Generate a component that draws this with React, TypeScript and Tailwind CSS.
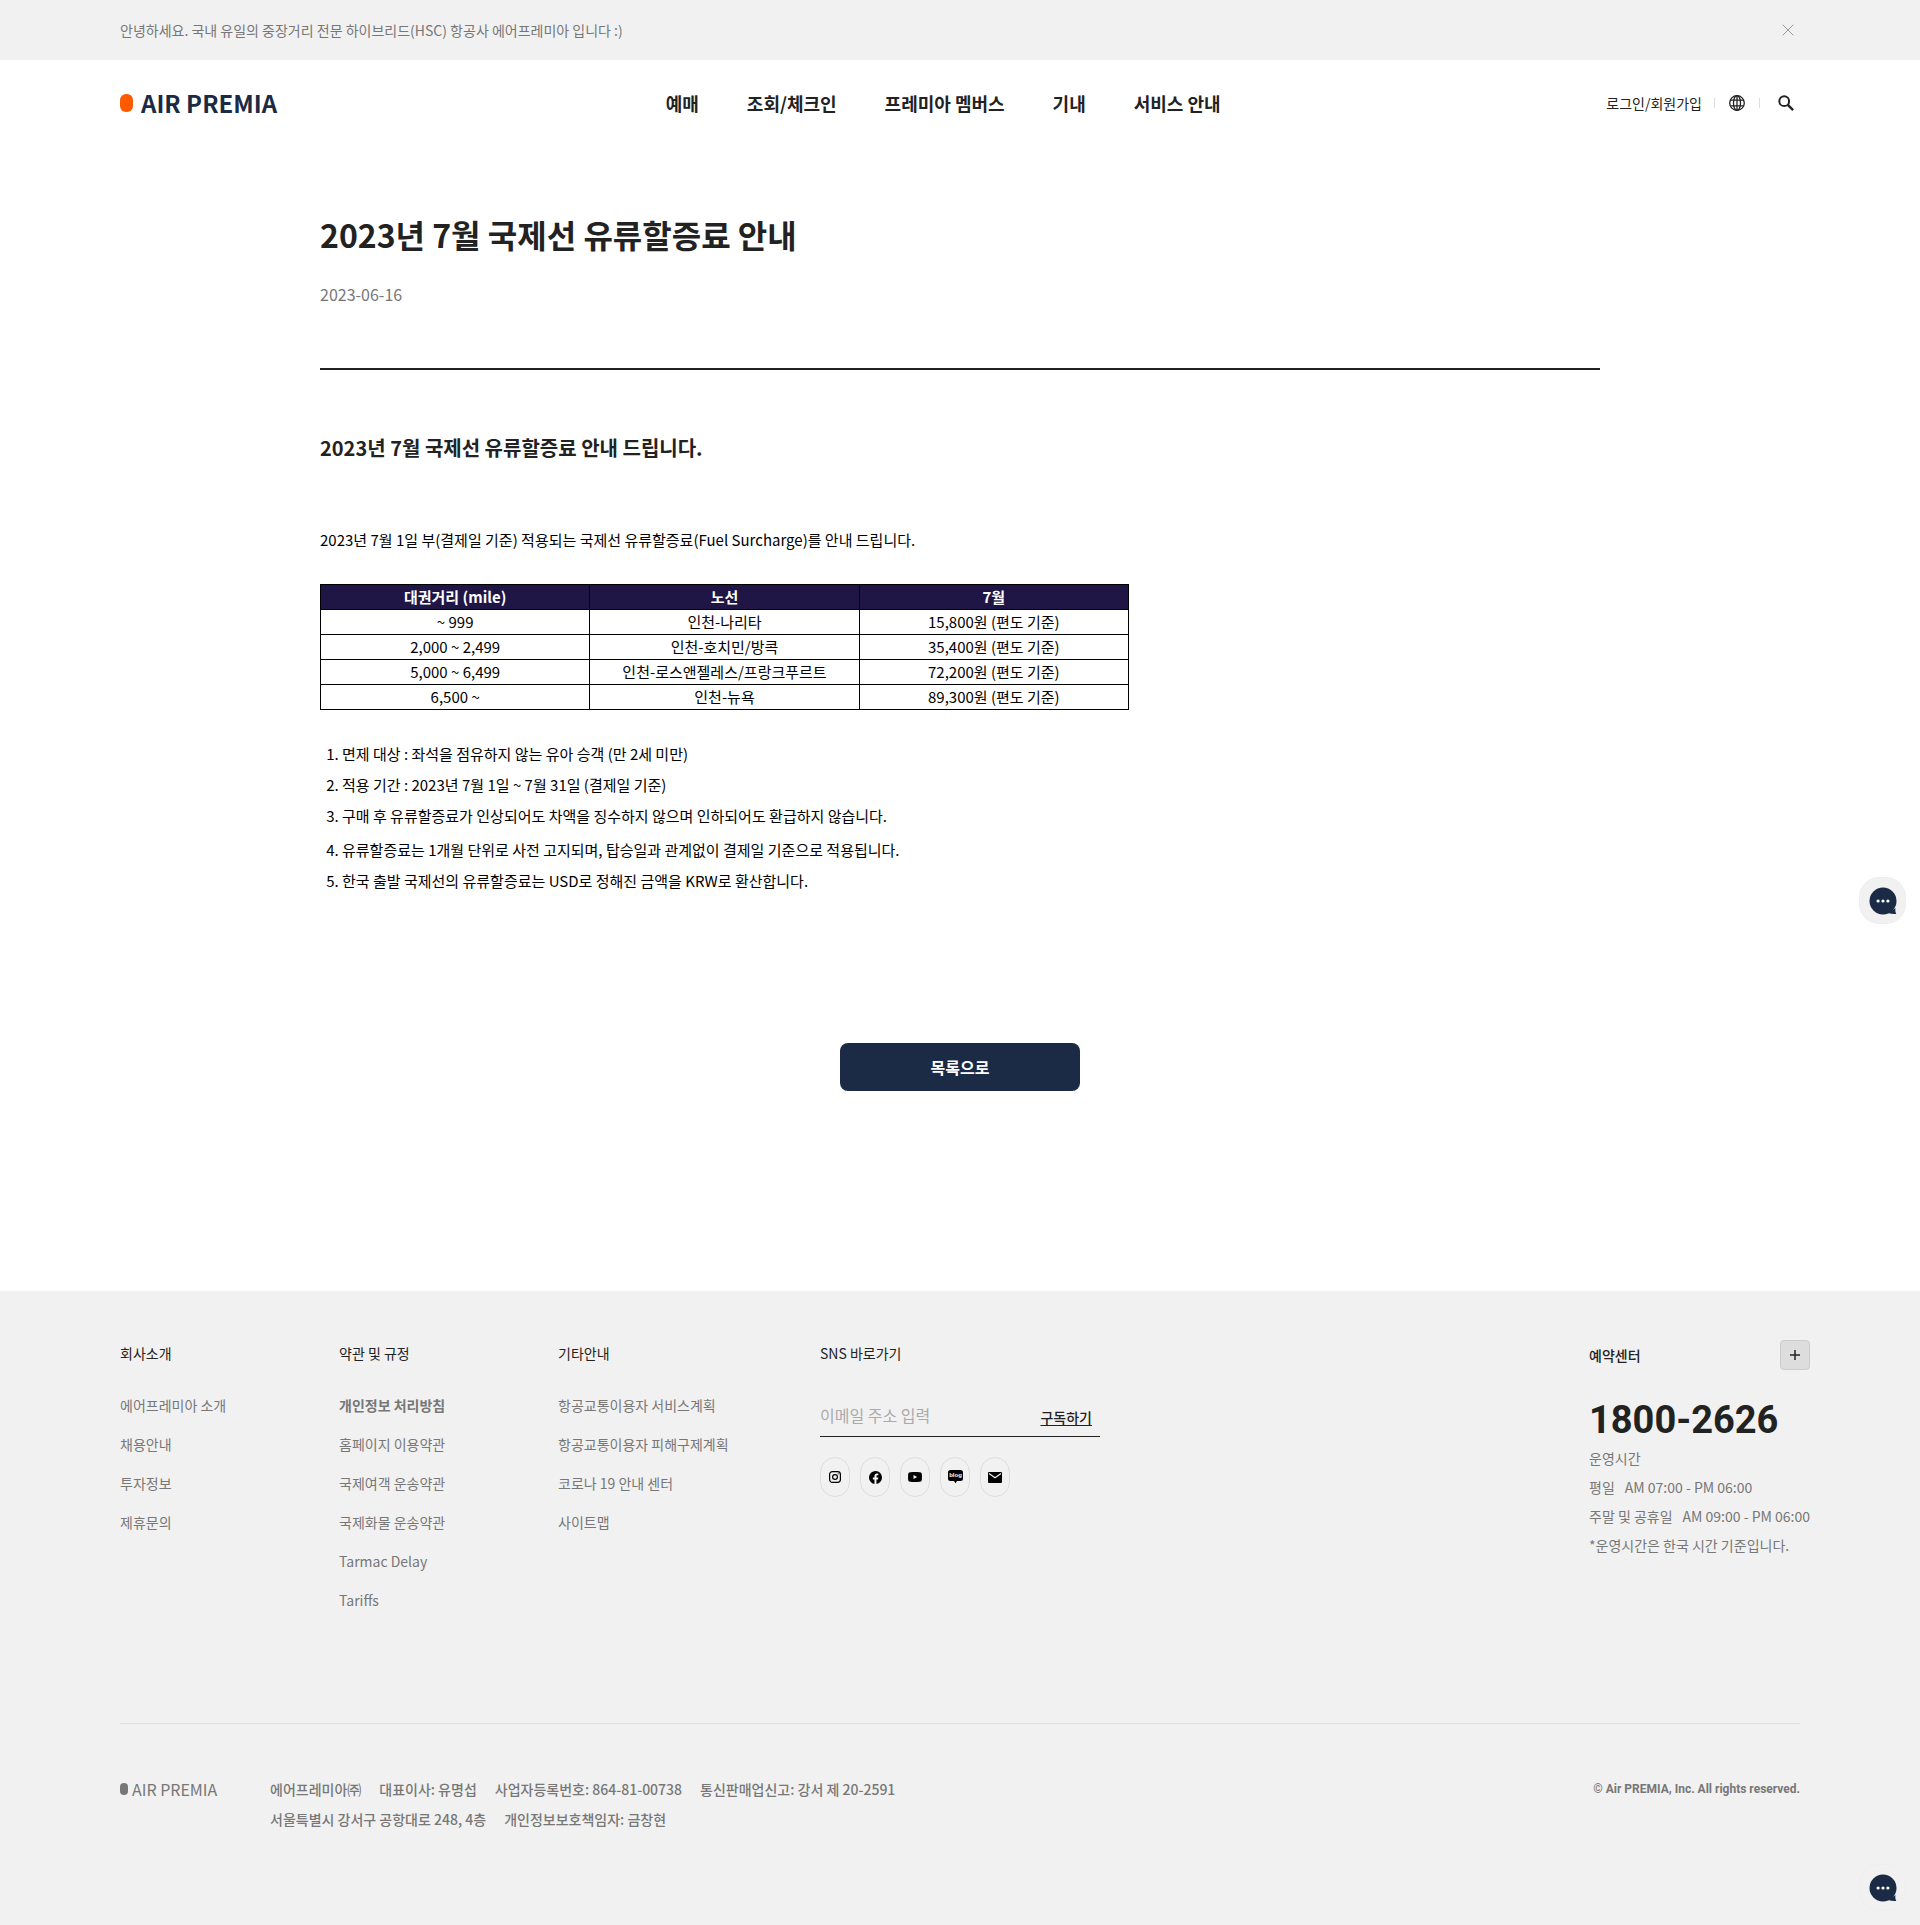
import React from "react";

const navItems = ["예매", "조회/체크인", "프레미아 멤버스", "기내", "서비스 안내"];

const fares = [
  ["~ 999", "인천-나리타", "15,800원 (편도 기준)"],
  ["2,000 ~ 2,499", "인천-호치민/방콕", "35,400원 (편도 기준)"],
  ["5,000 ~ 6,499", "인천-로스앤젤레스/프랑크푸르트", "72,200원 (편도 기준)"],
  ["6,500 ~", "인천-뉴욕", "89,300원 (편도 기준)"],
];

const customerNotes = [
  "면제 대상 : 좌석을 점유하지 않는 유아 승객 (만 2세 미만)",
  "적용 기간 : 2023년 7월 1일 ~ 7월 31일 (결제일 기준)",
  "구매 후 유류할증료가 인상되어도 차액을 징수하지 않으며 인하되어도 환급하지 않습니다.",
];

const policyNotes = [
  "유류할증료는 1개월 단위로 사전 고지되며, 탑승일과 관계없이 결제일 기준으로 적용됩니다.",
  "한국 출발 국제선의 유류할증료는 USD로 정해진 금액을 KRW로 환산합니다.",
];

const footerColumns = [
  { title: "회사소개", links: ["에어프레미아 소개", "채용안내", "투자정보", "제휴문의"] },
  {
    title: "약관 및 규정",
    links: ["개인정보 처리방침", "홈페이지 이용약관", "국제여객 운송약관", "국제화물 운송약관", "Tarmac Delay", "Tariffs"],
  },
  {
    title: "기타안내",
    links: ["항공교통이용자 서비스계획", "항공교통이용자 피해구제계획", "코로나 19 안내 센터", "사이트맵"],
  },
];

const companyLines = [
  ["에어프레미아㈜", "대표이사: 유명섭", "사업자등록번호: 864-81-00738", "통신판매업신고: 강서 제 20-2591"],
  ["서울특별시 강서구 공항대로 248, 4층", "개인정보보호책임자: 금창현"],
];

function CloseIcon() {
  return (
    <svg width="12" height="12" viewBox="0 0 12 12" fill="none" stroke="#999" strokeWidth="1" aria-hidden="true">
      <path d="M.7.7l10.6 10.6M11.3.7L.7 11.3" />
    </svg>
  );
}

function GlobeIcon() {
  return (
    <svg width="16" height="16" viewBox="0 0 16 16" fill="none" stroke="#222" strokeWidth="1.3" aria-hidden="true">
      <circle cx="8" cy="8" r="7.3" />
      <ellipse cx="8" cy="8" rx="3.5" ry="7.3" />
      <path d="M8 .7v14.6M1.4 5.2h13.2M1.4 10.8h13.2" />
    </svg>
  );
}

function SearchIcon() {
  return (
    <svg width="16" height="16" viewBox="0 0 16 16" fill="none" stroke="#222" aria-hidden="true">
      <circle cx="6.2" cy="6.2" r="4.9" strokeWidth="2" />
      <path d="M9.8 9.8l5.3 5.3" strokeWidth="2.4" />
    </svg>
  );
}

function ChatIcon() {
  return (
    <svg width="28" height="28" viewBox="0 0 28 28" aria-hidden="true">
      <g fill="#1b2b45">
        <circle cx="14" cy="14" r="13.5" />
        <path d="M19 26c2.700.7 5.300 1.200 8.300.9-1-1.800-1.200-3.600-.8-5.900z" />
      </g>
      <g fill="#fff">
        <circle cx="9.1" cy="14" r="1.6" />
        <circle cx="14" cy="14" r="1.6" />
        <circle cx="18.9" cy="14" r="1.6" />
      </g>
    </svg>
  );
}

function InstagramIcon() {
  return (
    <svg width="12" height="12" viewBox="0 0 12 12" fill="none" stroke="#000" strokeWidth="1.2" aria-hidden="true">
      <rect x=".6" y=".6" width="10.8" height="10.8" rx="2.8" />
      <circle cx="6" cy="6" r="2.4" />
      <circle cx="9.2" cy="2.8" r=".6" fill="#000" stroke="none" />
    </svg>
  );
}

function FacebookIcon() {
  return (
    <svg width="13" height="13" viewBox="0 0 24 24" fill="#000" aria-hidden="true">
      <path d="M24 12a12 12 0 1 0-13.900 11.900v-8.400H7.100V12h3V9.400c0-3 1.800-4.700 4.500-4.700 1.300 0 2.700.2 2.700.2v3h-1.500c-1.500 0-2 .9-2 1.900V12h3.400l-.5 3.500h-2.900v8.400A12 12 0 0 0 24 12z" />
    </svg>
  );
}

function YoutubeIcon() {
  return (
    <svg width="14" height="10" viewBox="0 0 14 10" aria-hidden="true">
      <path
        fill="#000"
        d="M2 .3C4 0 10 0 12 .3c1 .2 1.600.7 1.800 1.700.2 1.800.2 4.200 0 6-.2 1-.8 1.500-1.800 1.700-2 .3-8 .3-10 0C1 9.500.4 9 .2 8 0 6.200 0 3.800.2 2 .4 1 1 .5 2 .3z"
      />
      <path fill="#f1f1f1" d="M5.500 2.900v4.200L9.200 5z" />
    </svg>
  );
}

function BlogIcon() {
  return (
    <svg width="15" height="14" viewBox="0 0 15 14" aria-hidden="true">
      <path fill="#000" d="M2.500 0h10A2.500 2.500 0 0 1 15 2.500v6a2.500 2.500 0 0 1-2.500 2.500H9l-1.500 2.300L6 11H2.500A2.500 2.500 0 0 1 0 8.500v-6A2.500 2.500 0 0 1 2.500 0z" />
      <text x="7.5" y="7.2" fill="#fff" fontSize="6" fontWeight="700" textAnchor="middle" fontFamily="Liberation Sans, sans-serif">
        blog
      </text>
    </svg>
  );
}

function MailIcon() {
  return (
    <svg width="14" height="11" viewBox="0 0 14 11" aria-hidden="true">
      <rect width="14" height="11" rx="1" fill="#000" />
      <path d="M1 1.500l6 4.300 6-4.300" fill="none" stroke="#f1f1f1" strokeWidth="1.2" />
    </svg>
  );
}

const socials = [
  { name: "인스타그램", icon: <InstagramIcon /> },
  { name: "페이스북", icon: <FacebookIcon /> },
  { name: "유튜브", icon: <YoutubeIcon /> },
  { name: "블로그", icon: <BlogIcon /> },
  { name: "이메일", icon: <MailIcon /> },
];

function ChatButton({ label }: { label: string }) {
  return (
    <button
      type="button"
      aria-label={label}
      className="flex size-[47px] items-center justify-center rounded-[20px] border border-[#eee] bg-[#f1f1f1]"
    >
      <ChatIcon />
    </button>
  );
}

export default function App() {
  return (
    <div className="relative bg-white font-['Noto_Sans_CJK_KR',sans-serif] text-sm text-[#222]">
      <div className="flex h-15 items-center justify-between bg-[#f1f1f1] px-30 text-[#777]">
        <p>안녕하세요. 국내 유일의 중장거리 전문 하이브리드(HSC) 항공사 에어프레미아 입니다 :)</p>
        <button type="button" aria-label="닫기" className="flex size-6 items-center justify-center">
          <CloseIcon />
        </button>
      </div>

      <header className="flex h-[86px] items-center justify-between px-30">
        <a href="#" className="flex w-40 items-center gap-2 text-2xl leading-6 font-bold whitespace-nowrap text-[#1b2b45]">
          <span className="h-[18px] w-[13px] shrink-0 rounded-md bg-[#ff5a00]" />
          AIR PREMIA
        </a>
        <nav className="flex gap-12 text-lg font-bold">
          {navItems.map((item) => (
            <a key={item} href="#">
              {item}
            </a>
          ))}
        </nav>
        <div className="flex items-center">
          <a href="#">로그인/회원가입</a>
          <span className="mr-2 ml-3 h-2.5 w-px bg-[#ddd]" />
          <button type="button" aria-label="언어 선택" className="flex size-7 items-center justify-center">
            <GlobeIcon />
          </button>
          <span className="mr-3 ml-2 h-2.5 w-px bg-[#ddd]" />
          <button type="button" aria-label="검색" className="flex size-7 items-center justify-center">
            <SearchIcon />
          </button>
        </div>
      </header>

      <main className="mx-auto max-w-[1280px] pt-16 pb-[200px]">
        <h1 className="text-[32px] leading-12 font-bold">2023년 7월 국제선 유류할증료 안내</h1>
        <p className="mt-6 text-base text-[#777]">2023-06-16</p>
        <hr className="mt-[62px] border-t-2 border-[#222]" />
        <h2 className="mt-16 text-xl leading-7 font-bold">2023년 7월 국제선 유류할증료 안내 드립니다.</h2>
        <div className="text-[15px] leading-6 text-black">
          <p className="mt-[66px]">
            2023년 7월 1일 부(결제일 기준) 적용되는 국제선 유류할증료(Fuel Surcharge)를 안내 드립니다.
          </p>
          <table className="mt-8 w-[809px] max-w-full table-fixed border-collapse text-center">
            <thead>
              <tr className="bg-[#1f1646] text-white">
                {["대권거리 (mile)", "노선", "7월"].map((head) => (
                  <th key={head} className="h-[25px] border border-black p-0 font-bold">
                    {head}
                  </th>
                ))}
              </tr>
            </thead>
            <tbody>
              {fares.map((row) => (
                <tr key={row[0]}>
                  {row.map((cell) => (
                    <td key={cell} className="h-[25px] border border-black p-0">
                      {cell}
                    </td>
                  ))}
                </tr>
              ))}
            </tbody>
          </table>
          <ol className="mt-7 list-decimal pl-[22px] leading-[31px]">
            {customerNotes.map((note) => (
              <li key={note}>{note}</li>
            ))}
          </ol>
          <ol start={4} className="mt-[3px] list-decimal pl-[22px] leading-[31px]">
            {policyNotes.map((note) => (
              <li key={note}>{note}</li>
            ))}
          </ol>
        </div>
        <button
          type="button"
          className="mx-auto mt-[147px] block h-12 w-60 rounded-lg bg-[#1b2b45] text-base font-bold text-white"
        >
          목록으로
        </button>
      </main>

      <footer className="bg-[#f1f1f1] px-30 pt-[49px] pb-[91px] text-[#777]">
        <div className="flex justify-between pb-[103px]">
          <div className="flex">
            {footerColumns.map((column, index) => (
              <div key={column.title} className={index === 2 ? "w-[262px]" : "w-[219px]"}>
                <h3 className="leading-[26px] text-[#222]">{column.title}</h3>
                <ul className="mt-5 leading-[39px]">
                  {column.links.map((link) => (
                    <li key={link} className={link === "개인정보 처리방침" ? "font-bold" : ""}>
                      <a href="#">{link}</a>
                    </li>
                  ))}
                </ul>
              </div>
            ))}
            <div className="w-70">
              <h3 className="leading-[26px] text-[#222]">SNS 바로가기</h3>
              <form className="mt-[37px] flex h-[34px] items-start justify-between border-b border-[#222] pr-2">
                <input
                  type="email"
                  aria-label="이메일 주소"
                  placeholder="이메일 주소 입력"
                  className="h-6 w-50 text-base outline-none placeholder:text-[#aaa]"
                />
                <button type="button" className="h-7 font-medium text-[#222] underline underline-offset-2">
                  구독하기
                </button>
              </form>
              <ul className="mt-5 flex gap-2.5">
                {socials.map((social) => (
                  <li key={social.name}>
                    <a
                      href="#"
                      aria-label={social.name}
                      className="flex h-10 w-[30px] items-center justify-center rounded-[15px] border border-[#ddd]"
                    >
                      {social.icon}
                    </a>
                  </li>
                ))}
              </ul>
            </div>
          </div>

          <section className="w-[211px]">
            <div className="-mr-2.5 flex items-center justify-between">
              <h3 className="font-medium text-[#222]">예약센터</h3>
              <button
                type="button"
                aria-label="예약센터 더보기"
                className="flex size-[30px] items-center justify-center rounded border border-[#ccc] bg-[#ddd]"
              >
                <svg width="10" height="10" viewBox="0 0 10 10" stroke="#222" strokeWidth="1.5" aria-hidden="true">
                  <path d="M5 0v10M0 5h10" />
                </svg>
              </button>
            </div>
            <p className="mt-[26px] font-['Roboto',sans-serif] text-[38px] leading-12 font-bold whitespace-nowrap text-[#222]">
              1800-2626
            </p>
            <div className="leading-[29px] whitespace-nowrap">
              <p>운영시간</p>
              <p className="flex gap-2.5">
                <span>평일</span>
                <span>AM 07:00 - PM 06:00</span>
              </p>
              <p className="flex gap-2.5">
                <span>주말 및 공휴일</span>
                <span>AM 09:00 - PM 06:00</span>
              </p>
              <p>*운영시간은 한국 시간 기준입니다.</p>
            </div>
          </section>
        </div>

        <div className="flex items-start border-t border-[#ddd] pt-[50px] leading-[30px]">
          <div className="flex h-[30px] w-[150px] items-center gap-1 text-base">
            <span className="h-3 w-2 rounded bg-[#777]" />
            AIR PREMIA
          </div>
          <div className="flex-1 font-medium">
            {companyLines.map((line) => (
              <p key={line[0]} className="flex flex-wrap gap-x-[18px]">
                {line.map((part) => (
                  <span key={part}>{part}</span>
                ))}
              </p>
            ))}
          </div>
          <p className="font-['Roboto',sans-serif] text-xs leading-[30px] font-bold">
            © Air PREMIA, Inc. All rights reserved.
          </p>
        </div>
      </footer>

      <div className="fixed right-3.5 bottom-3.5">
        <ChatButton label="채팅 상담" />
      </div>
      <div className="absolute top-[877px] right-3.5">
        <ChatButton label="챗봇 상담" />
      </div>
    </div>
  );
}
